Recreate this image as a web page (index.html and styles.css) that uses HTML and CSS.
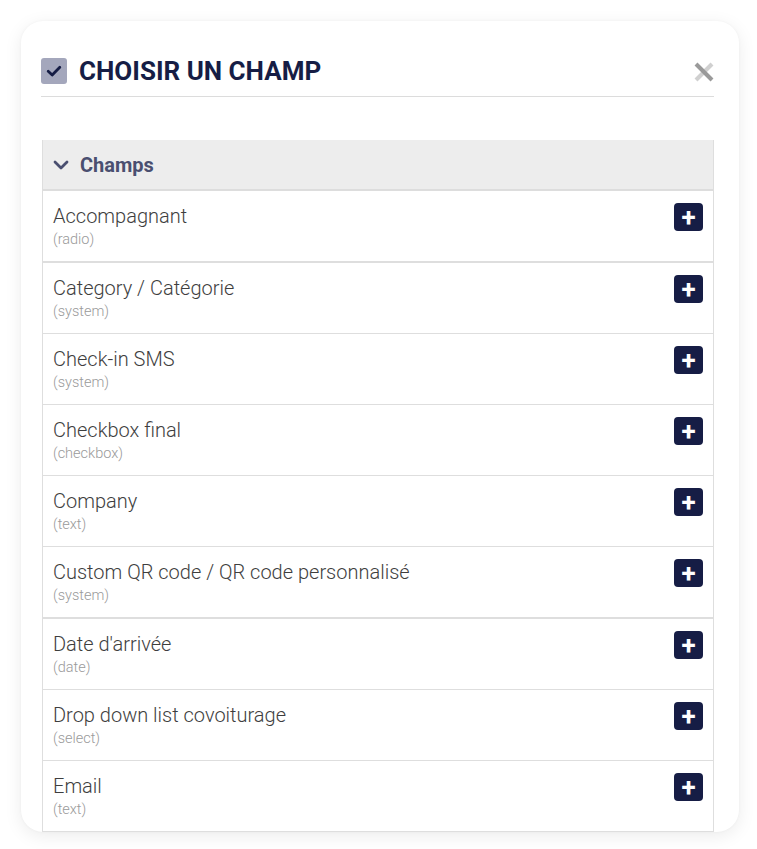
FILE: index.html
```html
<!DOCTYPE html>
<html lang="fr">
<head>
<meta charset="utf-8">
<link rel="stylesheet" href="styles.css">
</head>
<body>
<div class="modal">
  <div class="modal-header">
    <span class="check-box">
      <svg width="18" height="18" viewBox="0 0 18 18"><path d="M3.2 9.2 L7.2 13 L14.8 5.2" fill="none" stroke="#161d45" stroke-width="2.8" stroke-linecap="round" stroke-linejoin="round"/></svg>
    </span>
    <h1 class="title">CHOISIR UN CHAMP</h1>
    <span class="close">
      <svg width="22" height="22" viewBox="0 0 22 22"><path d="M3 19 L19 3" stroke="#d0d0d0" stroke-width="4"/><path d="M3 3 L19 19" stroke="#9a9a9a" stroke-width="4"/></svg>
    </span>
  </div>
  <div class="panel">
    <div class="panel-head">
      <svg class="chev" width="16" height="12" viewBox="0 0 16 12"><path d="M2 3 L8 9 L14 3" fill="none" stroke="#4a4f70" stroke-width="2.8" stroke-linecap="round" stroke-linejoin="round"/></svg>
      <span>Champs</span>
    </div>
    <div class="row thick"><div class="info"><div class="name">Accompagnant</div><div class="type">(radio)</div></div><button class="add">+</button></div>
    <div class="row"><div class="info"><div class="name">Category / Catégorie</div><div class="type">(system)</div></div><button class="add">+</button></div>
    <div class="row"><div class="info"><div class="name">Check-in SMS</div><div class="type">(system)</div></div><button class="add">+</button></div>
    <div class="row"><div class="info"><div class="name">Checkbox final</div><div class="type">(checkbox)</div></div><button class="add">+</button></div>
    <div class="row"><div class="info"><div class="name">Company</div><div class="type">(text)</div></div><button class="add">+</button></div>
    <div class="row thick"><div class="info"><div class="name">Custom QR code / QR code personnalisé</div><div class="type">(system)</div></div><button class="add">+</button></div>
    <div class="row"><div class="info"><div class="name">Date d'arrivée</div><div class="type">(date)</div></div><button class="add">+</button></div>
    <div class="row"><div class="info"><div class="name">Drop down list covoiturage</div><div class="type">(select)</div></div><button class="add">+</button></div>
    <div class="row"><div class="info"><div class="name">Email</div><div class="type">(text)</div></div><button class="add">+</button></div>
  </div>
</div>
</body>
</html>
```
FILE: styles.css
```css
* { box-sizing: border-box; }
html, body { margin: 0; padding: 0; background: #fff; }
body {
  font-family: Roboto, "Liberation Sans", sans-serif;
  padding: 21px 18px 0 21px;
  height: 849px;
  overflow: hidden;
}
.modal {
  width: 718px;
  height: 811px;
  background: #fff;
  border-radius: 22px;
  box-shadow: 0 4px 18px rgba(0,0,0,0.08), 0 0 3px rgba(0,0,0,0.04);
  padding: 0 25px 0 20px;
  overflow: hidden;
}
.modal-header {
  display: flex;
  align-items: center;
  height: 76px;
  padding-top: 25px;
  border-bottom: 1px solid #dcdcdc;
}
.check-box {
  width: 26px;
  height: 26px;
  border-radius: 3px;
  background: #a4a7bc;
  display: flex;
  align-items: center;
  justify-content: center;
  margin-right: 12px;
}
.title {
  margin: 0;
  flex: 1;
  font-size: 26px;
  font-weight: 700;
  color: #161d45;
  letter-spacing: 0;
}
.close {
  display: flex;
  margin-right: -1px;
  margin-top: 2px;
}
.panel {
  margin-top: 43px;
  margin-left: 1px;
  border-left: 1px solid #dedede;
  border-right: 1px solid #dedede;
}
.panel-head {
  height: 51px;
  background: #ededed;
  border-bottom: 2px solid #dddddd;
  display: flex;
  align-items: center;
  padding-left: 10px;
  font-size: 20px;
  font-weight: 700;
  color: #4a4f70;
}
.chev { margin-right: 11px; margin-top: 1px; }
.row {
  height: 71px;
  display: flex;
  justify-content: space-between;
  align-items: flex-start;
  padding: 12px 10px 0 10px;
  border-bottom: 1px solid #dedede;
}
.row.thick { border-bottom-width: 2px; height: 72px; }
.info { padding-top: 1px; }
.name {
  font-size: 20px;
  font-weight: 300;
  color: #3e3e3e;
  line-height: 24px;
}
.type {
  font-size: 14.5px;
  font-weight: 300;
  color: #9a9a9a;
  line-height: 18px;
  margin-top: 3px;
}
.add {
  width: 29px;
  height: 28px;
  border: none;
  border-radius: 4px;
  background: #161d45;
  color: #fff;
  font-family: Roboto, "Liberation Sans", sans-serif;
  font-size: 26px;
  font-weight: 700;
  line-height: 28px;
  padding: 0;
  display: flex;
  align-items: center;
  justify-content: center;
}
```
